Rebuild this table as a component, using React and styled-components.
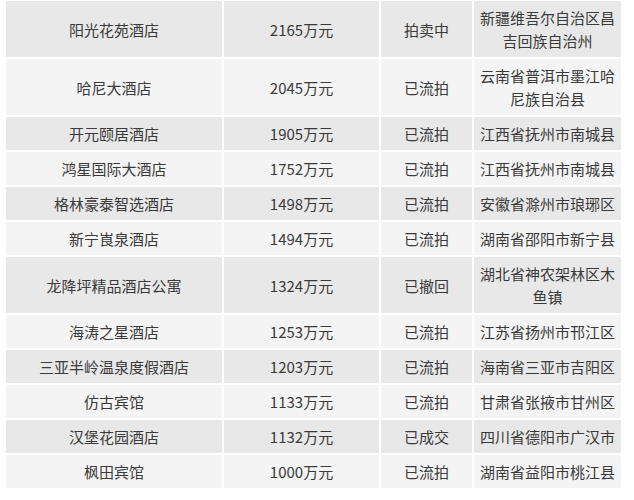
import React from 'react'
import styled, { createGlobalStyle } from 'styled-components'

//auction list data
const rows = [
    ['阳光花苑酒店', '2165万元', '拍卖中', '新疆维吾尔自治区昌吉回族自治州'],
    ['哈尼大酒店', '2045万元', '已流拍', '云南省普洱市墨江哈尼族自治县'],
    ['开元颐居酒店', '1905万元', '已流拍', '江西省抚州市南城县'],
    ['鸿星国际大酒店', '1752万元', '已流拍', '江西省抚州市南城县'],
    ['格林豪泰智选酒店', '1498万元', '已流拍', '安徽省滁州市琅琊区'],
    ['新宁崀泉酒店', '1494万元', '已流拍', '湖南省邵阳市新宁县'],
    ['龙降坪精品酒店公寓', '1324万元', '已撤回', '湖北省神农架林区木鱼镇'],
    ['海涛之星酒店', '1253万元', '已流拍', '江苏省扬州市邗江区'],
    ['三亚半岭温泉度假酒店', '1203万元', '已流拍', '海南省三亚市吉阳区'],
    ['仿古宾馆', '1133万元', '已流拍', '甘肃省张掖市甘州区'],
    ['汉堡花园酒店', '1132万元', '已成交', '四川省德阳市广汉市'],
    ['枫田宾馆', '1000万元', '已流拍', '湖南省益阳市桃江县'],
]

const colWidths = [216, 155, 91, 147]

export default function App() {
    return (
        <>
            <GlobalStyle />
            <Wrapper>
                <Table>
                    <colgroup>
                        {colWidths.map((w, i) => <col key={i} style={{width: w}} />)}
                    </colgroup>
                    <tbody>
                        {rows.map((row, i) => (
                            <Row key={i} $striped={i % 2 === 0}>
                                {row.map((cell, j) => <Cell key={j}>{cell}</Cell>)}
                            </Row>
                        ))}
                    </tbody>
                </Table>
            </Wrapper>
        </>
    )
}

const GlobalStyle = createGlobalStyle`
    html, body {
        margin: 0;
        background: #fff;
    }
    body {
        font-family: "Noto Sans CJK SC", "Noto Sans", sans-serif;
    }
`

const Wrapper = styled.div`
    padding: 0 0 0 4px;
    margin-top: -1px;
`

const Table = styled.table`
    border-collapse: separate;
    border-spacing: 2px;
    table-layout: fixed;
    width: 619px;
    background: #fff;
`

const Row = styled.tr`
    background: ${props => props.$striped ? '#e8e8e8' : '#f4f4f4'};
`

const Cell = styled.td`
    padding: 5px 5px;
    font-size: 15px;
    line-height: 23px;
    color: #3a3a3a;
    text-align: center;
    vertical-align: middle;
    word-break: break-all;
`
